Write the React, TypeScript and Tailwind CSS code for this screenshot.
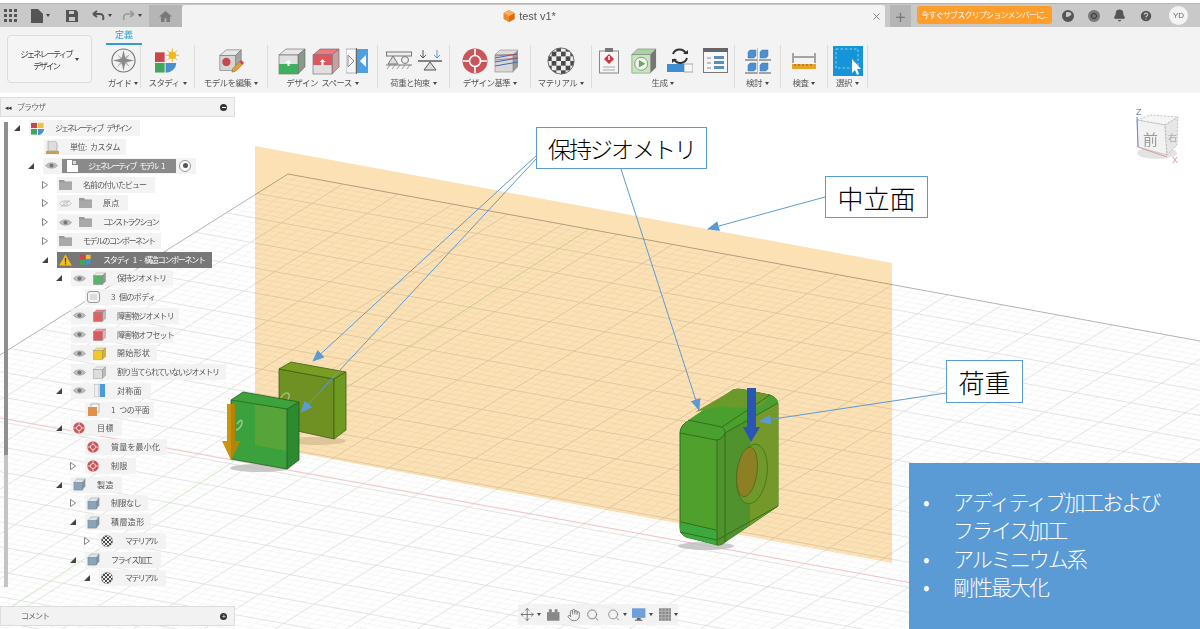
import type { ReactNode } from 'react'
import { Bell, CircleHelp, Hand, Move, Search, X } from 'lucide-react'

type Tri = 'filled' | 'open' | undefined

// --- viewport grid (orthographic floor, so plain lattice steps) ---
const O = { x: 288, y: 174 }
const U = { x: 55, y: 10.03 }
const V = { x: -30.8, y: 19.4 }

function gridPaths() {
  const minor: string[] = []
  const major: string[] = []
  for (let i = 1; i <= 170; i++) {
    const sx = O.x + (V.x * i) / 5
    const sy = O.y + (V.y * i) / 5
    const d = `M${sx} ${sy}L${sx + U.x * 34} ${sy + U.y * 34}`
    if (i % 5 === 0) major.push(d)
    else minor.push(d)
  }
  for (let j = 1; j <= 170; j++) {
    const sx = O.x + (U.x * j) / 5
    const sy = O.y + (U.y * j) / 5
    const d = `M${sx} ${sy}L${sx + V.x * 34} ${sy + V.y * 34}`
    if (j % 5 === 0) major.push(d)
    else minor.push(d)
  }
  return { minor: minor.join(''), major: major.join('') }
}

function Caret() {
  return <span className="inline-block ml-[3px] align-middle border-x-[2.5px] border-x-transparent border-t-[3px] border-t-[#444]" />
}

// --- small drawn icons ---
function Checker({ size = 28 }: { size?: number }) {
  const cells = []
  for (let y = 0; y < 6; y++) for (let x = 0; x < 6; x++) if ((x + y) % 2 === 0) cells.push(<rect key={`${x}${y}`} x={x * 5} y={y * 5} width="5" height="5" fill="#4a4a4a" />)
  return (
    <svg width={size} height={size} viewBox="0 0 30 30">
      <clipPath id={`cb${size}`}><circle cx="15" cy="15" r="14" /></clipPath>
      <circle cx="15" cy="15" r="14" fill="#eee" />
      <g clipPath={`url(#cb${size})`}>{cells}</g>
      <circle cx="15" cy="15" r="14" fill="none" stroke="#666" />
    </svg>
  )
}

function Target({ size = 26 }: { size?: number }) {
  return (
    <svg width={size} height={size} viewBox="0 0 26 26">
      <circle cx="13" cy="13" r="12.5" fill="#c9545a" />
      <circle cx="13" cy="13" r="5.5" fill="none" stroke="#fff" strokeWidth="1.6" />
      <path d="M13 1v7M13 18v7M1 13h7M18 13h7" stroke="#fff" strokeWidth="1.6" />
    </svg>
  )
}

function Cube({ top, front, side, size = 28, children }: { top: string; front: string; side: string; size?: number; children?: ReactNode }) {
  return (
    <svg width={size} height={size} viewBox="0 0 28 28">
      <path d="M1 8l7-6h19l-7 6z" fill={top} stroke="#666" strokeWidth=".6" />
      <path d="M20 8l7-6v18l-7 7z" fill={side} stroke="#666" strokeWidth=".6" />
      <rect x="1" y="8" width="19" height="19" fill={front} stroke="#666" strokeWidth=".6" />
      {children}
    </svg>
  )
}

function StudyIcon({ size = 13 }: { size?: number }) {
  return (
    <svg width={size} height={size} viewBox="0 0 14 14">
      <rect x="0" y="1" width="6.5" height="5.5" fill="#c8474b" />
      <rect x="0" y="7.5" width="6.5" height="6" fill="#3fa65a" />
      <path d="M7.5 7.5H14C14 11 11 14 7.5 14z" fill="#4a90d0" />
      <rect x="7.5" y="1" width="6" height="5.5" fill="#e8c33c" />
    </svg>
  )
}

function Eye({ off }: { off?: boolean }) {
  return (
    <svg width="13" height="9" viewBox="0 0 13 9">
      <path d="M.5 4.5C3 1 10 1 12.5 4.5 10 8 3 8 .5 4.5z" fill={off ? 'none' : '#bdbdbd'} stroke={off ? '#b5b5b5' : '#a5a5a5'} strokeWidth=".8" />
      <circle cx="6.5" cy="4.5" r="2" fill={off ? 'none' : '#777'} stroke={off ? '#b5b5b5' : 'none'} strokeWidth=".7" />
      {off && <path d="M2 8l9-7" stroke="#b5b5b5" strokeWidth=".8" />}
    </svg>
  )
}

function Folder() {
  return (
    <svg width="13" height="10" viewBox="0 0 13 10">
      <path d="M0 0h5l1 1.5h7V10H0z" fill="#9a9a9a" />
      <rect x="0" y="2.5" width="13" height="7.5" fill="#a9a9a9" />
    </svg>
  )
}

function Warning() {
  return (
    <svg width="13" height="12" viewBox="0 0 13 12">
      <path d="M6.5.5L12.8 11.5H.2z" fill="#f3c11b" />
      <rect x="5.9" y="4" width="1.2" height="4.5" fill="#333" />
      <rect x="5.9" y="9.2" width="1.2" height="1.2" fill="#333" />
    </svg>
  )
}

function SpaceCube() {
  return (
    <svg width="13" height="13" viewBox="0 0 14 14">
      <path d="M1 5l3-4h9l-3 4z" fill="#dfe6ea" stroke="#88949c" strokeWidth=".5" />
      <path d="M10 5l3-4v8l-3 4z" fill="#7d95a8" stroke="#88949c" strokeWidth=".5" />
      <rect x="1" y="5" width="9" height="8" fill="#8aa4b8" stroke="#6f7f8c" strokeWidth=".5" />
    </svg>
  )
}

const tinyCube = (top: string, front: string, side: string) => <Cube top={top} front={front} side={side} size={13} />

type RowData = {
  tri?: Tri
  left: string
  width: string
  track: string
  eye?: 'on' | 'off'
  icon: ReactNode
  label: string
  dark?: boolean
}

const treeRows: RowData[] = [
  { tri: 'filled', left: 'pl-[14px]', width: 'w-[111px]', track: 'tracking-[-2px] [word-spacing:4px]', icon: <StudyIcon />, label: 'ジェネレーティブ デザイン' },
  { left: 'pl-[29px]', width: 'w-[82px]', track: 'tracking-[-0.5px] [word-spacing:2px]', icon: <svg width="13" height="13" viewBox="0 0 13 13"><path d="M2 0h7l2 2v8H2z" fill="#ddd" stroke="#999" strokeWidth=".6" /><rect x="0" y="10" width="13" height="3" fill="#c8a04a" /></svg>, label: '単位: カスタム' },
]

const restRows: RowData[] = [
  { tri: 'open', left: 'pl-[42px]', width: 'w-[98px]', track: 'tracking-[-1px]', icon: <Folder />, label: '名前の付いたビュー' },
  { tri: 'open', left: 'pl-[42px]', width: 'w-[71px]', track: 'tracking-[0.3px]', eye: 'off', icon: <Folder />, label: '原点' },
  { tri: 'open', left: 'pl-[42px]', width: 'w-[103px]', track: 'tracking-[-1.9px]', eye: 'on', icon: <Folder />, label: 'コンストラクション' },
  { tri: 'open', left: 'pl-[42px]', width: 'w-[104px]', track: 'tracking-[-1.5px]', icon: <Folder />, label: 'モデルのコンポーネント' },
  { tri: 'filled', left: 'pl-[42px]', width: 'w-[155px]', track: 'tracking-[-1.3px] [word-spacing:3px]', eye: 'on', icon: <StudyIcon size={11} />, label: 'スタディ 1 - 構造コンポーネント', dark: true },
  { tri: 'filled', left: 'pl-[56px]', width: 'w-[102px]', track: 'tracking-[-1px]', eye: 'on', icon: tinyCube('#eee', '#58b46a', '#999'), label: '保持ジオメトリ' },
  { left: 'pl-[70px]', width: 'w-[67px]', track: 'tracking-[-0.6px] [word-spacing:3px]', icon: <svg width="13" height="12" viewBox="0 0 13 12"><rect x=".5" y=".5" width="12" height="11" rx="2.5" fill="#f4f4f4" stroke="#999" /><rect x="3" y="3" width="7" height="6" rx="1" fill="#dcdcdc" /></svg>, label: '3 個のボディ' },
  { left: 'pl-[56px]', width: 'w-[108px]', track: 'tracking-[-0.9px]', eye: 'on', icon: tinyCube('#f08088', '#e06068', '#bbb'), label: '障害物ジオメトリ' },
  { left: 'pl-[56px]', width: 'w-[102px]', track: 'tracking-[-0.9px]', eye: 'on', icon: tinyCube('#f0a0a0', '#d85a60', '#e8b0b0'), label: '障害物オフセット' },
  { left: 'pl-[56px]', width: 'w-[86px]', track: 'tracking-[0.3px]', eye: 'on', icon: tinyCube('#f6e07a', '#f0c828', '#ddb020'), label: '開始形状' },
  { left: 'pl-[56px]', width: 'w-[155px]', track: 'tracking-[-1.2px]', eye: 'on', icon: tinyCube('#eee', '#ddd', '#bbb'), label: '割り当てられていないジオメトリ' },
  { tri: 'filled', left: 'pl-[56px]', width: 'w-[80px]', track: 'tracking-[0.3px]', eye: 'on', icon: <svg width="11" height="13" viewBox="0 0 11 13"><rect width="5" height="13" fill="#eee" stroke="#888" strokeWidth=".5" /><rect x="6" width="5" height="13" fill="#4a9bdc" /></svg>, label: '対称面' },
  { left: 'pl-[70px]', width: 'w-[69px]', track: 'tracking-[-0.5px] [word-spacing:3px]', icon: <svg width="13" height="13" viewBox="0 0 13 13"><rect x="4" y="1" width="8" height="8" fill="#fff" stroke="#999" strokeWidth=".7" /><rect x="1" y="4" width="9" height="9" fill="#e0904a" /></svg>, label: '1 つの平面' },
  { tri: 'filled', left: 'pl-[56px]', width: 'w-[51px]', track: 'tracking-[0.4px]', icon: <Target size={12} />, label: '目標' },
  { left: 'pl-[70px]', width: 'w-[82px]', track: 'tracking-[0.2px]', icon: <Target size={12} />, label: '質量を最小化' },
  { tri: 'open', left: 'pl-[70px]', width: 'w-[51px]', track: 'tracking-[0.3px]', icon: <Target size={12} />, label: '制限' },
  { tri: 'filled', left: 'pl-[56px]', width: 'w-[51px]', track: 'tracking-[0.4px]', icon: <SpaceCube />, label: '製造' },
  { tri: 'open', left: 'pl-[70px]', width: 'w-[63px]', track: 'tracking-[-0.5px]', icon: <SpaceCube />, label: '制限なし' },
  { tri: 'filled', left: 'pl-[70px]', width: 'w-[66px]', track: 'tracking-[0.4px]', icon: <SpaceCube />, label: '積層造形' },
  { tri: 'open', left: 'pl-[84px]', width: 'w-[67px]', track: 'tracking-[-1.6px]', icon: <Checker size={12} />, label: 'マテリアル' },
  { tri: 'filled', left: 'pl-[70px]', width: 'w-[76px]', track: 'tracking-[-1.2px]', icon: <SpaceCube />, label: 'フライス加工' },
  { tri: 'filled', left: 'pl-[84px]', width: 'w-[67px]', track: 'tracking-[-1.6px]', icon: <Checker size={12} />, label: 'マテリアル' },
]

function TriMark({ kind }: { kind: Tri }) {
  return (
    <span className="w-[15px] shrink-0 flex items-center">
      {kind === 'filled' && <svg width="6" height="6" viewBox="0 0 6 6"><path d="M6 0v6H0z" fill="#444" /></svg>}
      {kind === 'open' && <svg width="6" height="8" viewBox="0 0 6 8"><path d="M.5.5L5.5 4 .5 7.5z" fill="#fff" stroke="#666" strokeWidth=".8" /></svg>}
    </span>
  )
}

function TreeRow({ row }: { row: RowData }) {
  return (
    <div className={`flex items-center h-[18.75px] ${row.left}`}>
      <TriMark kind={row.tri} />
      <div className={`flex items-center h-[16px] text-[8px] whitespace-nowrap ${row.width} ${row.track} ${row.dark ? 'bg-[#777] text-white' : 'bg-[#f2f2f2]/90 text-[#555]'}`}>
        {row.eye ? (
          <>
            <span className="w-[16px] shrink-0 flex justify-center">{row.dark ? <Warning /> : <Eye off={row.eye === 'off'} />}</span>
            <span className="w-[24px] shrink-0 flex justify-center">{row.icon}</span>
            <span className="pl-[6px]">{row.label}</span>
          </>
        ) : (
          <>
            <span className="w-[16px] shrink-0 flex justify-center">{row.icon}</span>
            <span className="pl-[10px]">{row.label}</span>
          </>
        )}
      </div>
    </div>
  )
}

function ModelRow() {
  return (
    <div className="flex items-center h-[18.75px] pl-[28px]">
      <TriMark kind="filled" />
      <div className="flex items-center h-[16px] w-[153px] bg-[#f2f2f2]/90 text-[8px] tracking-[-2px] [word-spacing:4px] whitespace-nowrap">
        <span className="w-[16px] shrink-0 flex justify-center"><Eye /></span>
        <div className="ml-[3px] w-[114px] shrink-0 h-[14px] bg-[#8a8a8a] text-white flex items-center">
          <span className="w-[20px] shrink-0 flex justify-center">
            <svg width="11" height="12" viewBox="0 0 11 12"><path d="M0 0h5v5h6v7H0z" fill="#fff" /><path d="M6 1h3v3H6z" fill="#ddd" /></svg>
          </span>
          <span className="pl-[6px]">ジェネレーティブ モデル 1</span>
        </div>
        <span className="ml-[3px] w-[12px] h-[12px] shrink-0 rounded-full border border-[#999] bg-white flex items-center justify-center">
          <span className="w-[5px] h-[5px] rounded-full bg-[#555]" />
        </span>
      </div>
    </div>
  )
}

function Group({ width, label, children }: { width: string; label: string; children: ReactNode }) {
  return (
    <div className={`flex flex-col items-center h-[43px] border-r border-[#dddddd] ${width}`}>
      <div className="h-[31px] flex items-center justify-center gap-[6px]">{children}</div>
      <div className="text-[8.5px] tracking-[-0.6px] [word-spacing:2px] leading-[12px] text-[#555] whitespace-nowrap">{label}<Caret /></div>
    </div>
  )
}

function TitleBar() {
  return (
    <div className="h-[24px] bg-[#c9c9c9] border-t border-[#b5b5b5] flex items-end text-[#555]">
      <div className="w-[149px] h-full flex items-center pl-[4px]">
        <svg width="13" height="13" viewBox="0 0 13 13" fill="#555"><rect x="0" y="0" width="3" height="3" /><rect x="5" y="0" width="3" height="3" /><rect x="10" y="0" width="3" height="3" /><rect x="0" y="5" width="3" height="3" /><rect x="5" y="5" width="3" height="3" /><rect x="10" y="5" width="3" height="3" /><rect x="0" y="10" width="3" height="3" /><rect x="5" y="10" width="3" height="3" /><rect x="10" y="10" width="3" height="3" /></svg>
        <svg className="ml-[14px]" width="12" height="14" viewBox="0 0 12 14" fill="#555"><path d="M0 0h7l5 5v9H0z" /></svg>
        <Caret />
        <svg className="ml-[16px]" width="12" height="12" viewBox="0 0 12 12" fill="#555"><path d="M0 0h10l2 2v10H0zM3 1v3h5V1zM3 7v4h6V7z" fillRule="evenodd" /></svg>
        <svg className="ml-[14px]" width="13" height="11" viewBox="0 0 13 11" fill="none" stroke="#555" strokeWidth="2"><path d="M1 4h7c3 0 4 3 3 6M1 4l4-3M1 4l4 3" /></svg>
        <Caret />
        <svg className="ml-[10px]" width="13" height="11" viewBox="0 0 13 11" fill="none" stroke="#999" strokeWidth="1.6"><path d="M12 4H5C2 4 1 7 2 10M12 4L8 1M12 4L8 7" /></svg>
        <Caret />
      </div>
      <div className="w-[33px] h-[22px] bg-[#b5b5b5] flex items-center justify-center">
        <svg width="13" height="11" viewBox="0 0 14 12" fill="#7a7a7a"><path d="M7 0l7 6h-2v6H8V8H6v4H2V6H0z" /></svg>
      </div>
      <div className="w-[703px] h-[22px] bg-[#f3f3f3] rounded-t-[3px] grid grid-cols-[1fr_auto_1fr] items-center">
        <span />
        <div className="flex items-center gap-[4px] pr-[8px] font-['Liberation_Sans',sans-serif] text-[11px] text-[#555]">
          <svg width="12" height="12" viewBox="0 0 12 12"><path d="M6 0l5.500 3v6L6 12 .5 9V3z" fill="#f08a2c" /><path d="M6 6l5.500-3v6L6 12z" fill="#d86f15" /><path d="M6 0l5.500 3L6 6 .5 3z" fill="#f8b060" /></svg>
          test v1*
        </div>
        <X className="justify-self-end mr-[3px] text-[#777]" size={11} />
      </div>
      <div className="ml-[5px] w-[21px] h-[22px] bg-[#b5b5b5] flex items-center justify-center text-[#777] text-[18px] leading-none">+</div>
      <div className="ml-[6px] mb-[3px] w-[135px] h-[18px] rounded-[3px] bg-[#ff9e2a] text-white text-[8px] tracking-[-0.8px] flex items-center justify-center whitespace-nowrap overflow-hidden">今すぐサブスクリプションメンバーに...</div>
      <div className="h-full flex items-center">
        <span className="ml-[10px] w-[12px] h-[12px] rounded-full bg-[#555] border-[2px] border-[#555] overflow-hidden flex">
          <span className="w-[6px] h-[5px] bg-[#c9c9c9] rounded-br-full ml-[2px]" />
        </span>
        <span className="ml-[14px] w-[12px] h-[12px] rounded-full bg-[#777] flex items-center justify-center">
          <span className="w-[6px] h-[6px] rounded-full border border-[#333]" />
        </span>
        <Bell className="ml-[13px]" size={13} fill="#555" stroke="#555" />
        <CircleHelp className="ml-[13px]" size={14} fill="#555" stroke="#c9c9c9" />
        <span className="ml-[16px] w-[19px] h-[19px] rounded-full bg-[#f3f3f3] text-[8px] text-[#666] font-['Liberation_Sans',sans-serif] flex items-center justify-center">YD</span>
      </div>
    </div>
  )
}

function Ribbon() {
  return (
    <div className="h-[66px] bg-[#f3f3f3] flex pl-[7px]">
      <div className="mt-[8px] w-[85px] h-[48px] rounded-[4px] border border-[#dcdcdc] bg-[#f5f5f5] flex items-center justify-center text-[8.5px] leading-[12px] tracking-[-2px] text-[#444] text-center">
        <span>ジェネレーティブ<br />デザイン</span>
        <Caret />
      </div>
      <div className="ml-[14px] flex flex-col">
        <div className="w-[36px] h-[18px] border-b-[2px] border-[#2f9fd0] text-[9px] text-[#2f9fd0] text-center leading-[15px]">定義</div>
        <div className="flex">
          <Group width="w-[35px]" label="ガイド">
            <svg width="25" height="25" viewBox="0 0 26 26">
              <circle cx="13" cy="13" r="12" fill="#f1f1f1" stroke="#777" strokeWidth="1.2" />
              <path d="M6 6l6 5 8-5-5 7 5 7-7-5-7 5 5-7z" fill="#b5b5b5" />
              <path d="M13 2l2 9 9 2-9 2-2 9-2-9-9-2 9-2z" fill="#8a8a8a" />
            </svg>
          </Group>
          <Group width="w-[54px]" label="スタディ">
            <svg width="25" height="26" viewBox="0 0 26 26">
              <rect x="0" y="4" width="10" height="10" fill="#c8474b" />
              <rect x="0" y="15" width="10" height="10" fill="#3fa65a" />
              <path d="M11 15h11c0 6-5 10-11 10z" fill="#4a90d0" />
              <circle cx="18" cy="7" r="4" fill="#f2b71f" />
              <path d="M18 0v14M11 7h14M13 2l10 10M23 2L13 12" stroke="#f2b71f" strokeWidth="1" />
            </svg>
          </Group>
          <Group width="w-[73px]" label="モデルを編集">
            <svg width="26" height="26" viewBox="0 0 28 28">
              <path d="M2 8l7-6h16l-6 6z" fill="#e8e8e8" stroke="#777" strokeWidth=".7" />
              <path d="M19 8l6-6v15l-6 7z" fill="#a5a5a5" stroke="#777" strokeWidth=".7" />
              <rect x="2" y="8" width="17" height="16" fill="#d5d5d5" stroke="#777" strokeWidth=".7" />
              <circle cx="9" cy="15" r="4.500" fill="#c8474b" />
              <path d="M15 26l1-4 8-8 3 3-8 8z" fill="#e0a040" stroke="#a06a20" strokeWidth=".6" />
              <path d="M23 15l3 3 2-2-3-3z" fill="#d0484c" />
            </svg>
          </Group>
          <Group width="w-[110px]" label="デザイン スペース">
            <Cube top="#e6e6e6" front="#e0e0e0" side="#8a9a8a">
              <rect x="1" y="17" width="19" height="10" fill="#3fb060" />
              <path d="M10.500 13l3 3h-2v3h-2v-3h-2z" fill="#fff" />
            </Cube>
            <Cube top="#ee7a80" front="#e0e0e0" side="#c8a0a0">
              <rect x="1" y="8" width="19" height="10" fill="#e0565e" />
              <path d="M10.500 12l3 3h-2v4h-2v-4h-2z" fill="#fff" />
            </Cube>
            <svg width="22" height="26" viewBox="0 0 22 26">
              <rect x="0" y="1" width="10" height="24" fill="#f7f7f7" stroke="#888" strokeWidth=".6" />
              <path d="M2 7l6 6-6 6z" fill="none" stroke="#888" />
              <rect x="11" y="1" width="11" height="24" fill="#4f9fe0" />
              <path d="M20 7l-6 6 6 6z" fill="#fff" />
              <path d="M10.500 0v26" stroke="#666" />
            </svg>
          </Group>
          <Group width="w-[72px]" label="荷重と拘束">
            <svg width="26" height="20" viewBox="0 0 26 20" fill="none" stroke="#777">
              <rect x=".5" y="1" width="25" height="4" fill="#eee" />
              <path d="M7 5l-5 8h10z" fill="#ddd" />
              <circle cx="19" cy="9" r="3.500" fill="#eee" />
              <path d="M0 14h26" />
              <path d="M1 18l3-4M6 18l3-4M11 18l3-4M16 18l3-4M21 18l3-4" strokeWidth=".7" />
            </svg>
            <svg width="24" height="24" viewBox="0 0 24 24" fill="none" stroke="#555">
              <path d="M5 1v7M2 6l3 3 3-3" />
              <path d="M19 1v7M16 6l3 3 3-3" stroke="#4f9fe0" />
              <path d="M0 12h24" strokeWidth="1.4" />
              <path d="M12 13l-6 8h12z" fill="#ddd" />
            </svg>
          </Group>
          <Group width="w-[81px]" label="デザイン基準">
            <Target />
            <svg width="25" height="24" viewBox="0 0 25 24">
              <path d="M1 6l5-5h18l-5 5z" fill="#dcdcdc" stroke="#777" strokeWidth=".5" />
              <path d="M19 6l5-5v17l-5 5z" fill="#999" />
              <rect x="1" y="6" width="18" height="17" fill="#d8d8d8" stroke="#777" strokeWidth=".5" />
              <path d="M1 9l22-4M1 13l23-4M1 17l23-4" stroke="#3f6ab5" strokeWidth="1" />
              <path d="M1 7l23-2M1 11l23-2" stroke="#c8474b" strokeWidth=".6" />
            </svg>
          </Group>
          <Group width="w-[61px]" label="マテリアル">
            <Checker />
          </Group>
          <Group width="w-[143px]" label="生成">
            <svg width="20" height="26" viewBox="0 0 20 26">
              <rect x=".5" y="3" width="19" height="22" fill="#f5f5f5" stroke="#888" />
              <rect x="6" y="0" width="8" height="4" fill="#777" />
              <path d="M10 6l5 5-5 5-5-5z" fill="#d8343a" />
              <rect x="9.200" y="8" width="1.600" height="4" fill="#fff" />
              <path d="M4 19h12M4 22h12" stroke="#aaa" />
            </svg>
            <svg className="ml-[6px]" width="26" height="26" viewBox="0 0 28 28">
              <path d="M1 7l6-6h20l-6 6z" fill="#a8d4a0" stroke="#666" strokeWidth=".5" />
              <path d="M21 7l6-6v20l-6 6z" fill="#777" />
              <rect x="1" y="7" width="20" height="20" fill="#c8e4c0" stroke="#666" strokeWidth=".5" />
              <circle cx="11" cy="17" r="7" fill="#f3f3f3" stroke="#6aa860" />
              <path d="M8.500 13l7 4-7 4z" fill="#6aa860" />
            </svg>
            <svg className="ml-[4px]" width="26" height="26" viewBox="0 0 26 26">
              <path d="M6 6a7 7 0 0 1 13 0M20 10a7 7 0 0 1-13 1" fill="none" stroke="#333" strokeWidth="2" />
              <path d="M16 6h5V2zM10 11H5v4z" fill="#333" />
              <rect x="0" y="16" width="17" height="8" fill="#3f8fd0" />
              <rect x="17" y="16" width="9" height="8" fill="#f5f5f5" stroke="#777" strokeWidth=".6" />
            </svg>
            <svg className="ml-[4px]" width="25" height="25" viewBox="0 0 25 25">
              <rect x=".5" y=".5" width="24" height="24" fill="#f7f7f7" stroke="#777" />
              <rect x="0" y="0" width="25" height="4" fill="#666" />
              <path d="M4 10h4M4 15h4M4 20h4" stroke="#888" />
              <path d="M11 8h10v3H11zM11 13h10v3H11zM11 18h10v3H11z" fill="#5a8fbd" />
            </svg>
          </Group>
          <Group width="w-[46px]" label="検討">
            <svg width="26" height="26" viewBox="0 0 26 26">
              <g fill="#4f8fd0" stroke="#3f78b0" strokeWidth=".5">
                <path d="M3 4l2-2h6v6l-2 2H3z" />
                <path d="M15 4l2-2h6v6l-2 2h-6z" />
                <path d="M3 17l2-2h6v6l-2 2H3z" />
                <path d="M15 17l2-2h6v6l-2 2h-6z" />
              </g>
              <path d="M0 12h12M14 12h12M0 25h12M14 25h12" stroke="#555" strokeWidth="1.2" />
              <path d="M12.500 0v26" stroke="#bbb" />
            </svg>
          </Group>
          <Group width="w-[47px]" label="検査">
            <svg width="24" height="20" viewBox="0 0 24 20">
              <path d="M1 2v10M23 2v10M2 6h20" stroke="#555" fill="none" />
              <rect x="0" y="13" width="24" height="5" fill="#e8a32c" />
              <path d="M3 13v2M7 13v2M11 13v2M15 13v2M19 13v2" stroke="#8a6010" />
            </svg>
          </Group>
          <Group width="w-[40px]" label="選択">
            <svg width="30" height="30" viewBox="0 0 30 30">
              <rect width="30" height="30" fill="#1694d8" />
              <rect x="3" y="3" width="22" height="19" fill="none" stroke="#8fd0f0" strokeDasharray="2.5 2" />
              <path d="M19 13v14l3-3 2 5 2-1-2-5h4z" fill="#fff" />
            </svg>
          </Group>
        </div>
      </div>
    </div>
  )
}

function Scene() {
  const grid = gridPaths()
  return (
    <svg className="absolute inset-0 w-full h-full" viewBox="0 93 1200 536">
      <defs>
        <marker id="ah" markerWidth="12" markerHeight="10" refX="11" refY="5" orient="auto" markerUnits="userSpaceOnUse">
          <path d="M0 0L12 5 0 10z" fill="#5b9bd5" />
        </marker>
        <clipPath id="floorClip"><path d="M0 355L288 174L1200 341V629H0z" /></clipPath>
      </defs>

      {/* floor */}
      <g clipPath="url(#floorClip)" fill="none">
        <path d={grid.minor} stroke="#f0f0f0" strokeWidth=".6" />
        <path d={grid.major} stroke="#dcdcdc" strokeWidth=".8" />
        <path d="M0 418L1200 635" stroke="#f0bcbc" strokeWidth=".9" />
        <path d="M0 614L589 229" stroke="#c8e6bc" strokeWidth=".9" />
      </g>
      <path d="M0 355L288 174L1200 341" fill="none" stroke="#b3b3b3" strokeWidth="1" />

      {/* neutral plane */}
      <path d="M255 146L892 263V563L255 445z" fill="#fce1b5" className="mix-blend-multiply" />

      {/* back block */}
      <ellipse cx="316" cy="441" rx="30" ry="4" fill="#cdb48c" opacity=".6" />
      <g stroke="#3f5f12" strokeWidth=".8" strokeLinejoin="round">
        <path d="M279 369L334 379V439L279 427z" fill="#6f9022" />
        <path d="M279 369L291 362L346 372L334 379z" fill="#7a9c22" />
        <path d="M334 379L346 372V430L334 439z" fill="#6e9a20" />
      </g>
      <path d="M281 398c2-5 6-6 8-4 1 3-1 7-5 9l-2 4" fill="none" stroke="#a9bc72" strokeWidth="1.5" />

      {/* front block */}
      <ellipse cx="260" cy="468" rx="30" ry="4" fill="#bdbdbd" opacity=".8" />
      <g strokeLinejoin="round">
        <path d="M231 400L287 409V469L231 459z" fill="#3ba13c" />
        <path d="M255 404L287 409V451L255 445z" fill="#57a53a" />
        <path d="M231 400L243 392L299 402L287 409z" fill="#3ea23a" />
        <path d="M287 409L299 402V460L287 469z" fill="#2e8a30" />
        <path d="M231 400L287 409V469L231 459zM231 400L243 392L299 402L287 409M299 402V460L287 469" fill="none" stroke="#1e5e1e" strokeWidth=".8" />
      </g>
      <path d="M237 424c3-4 5-5 5-2 0 3-2 7-6 8" fill="none" stroke="#9acb90" strokeWidth="1.4" />
      <path d="M227 404h8v37h5l-9 19-9-19h5z" fill="#c8950c" />
      <path d="M231 404h4v37h5l-9 19z" fill="#b38408" />

      {/* holder with hole */}
      <ellipse cx="706" cy="546" rx="28" ry="4" fill="#bdbdbd" opacity=".8" />
      <path d="M680 432Q681 424 690 420L733 390Q737 388 745 390L770 395Q778 398 778 405V506L725 542Q720 547 714 544L686 537Q680 534 680 528z" fill="#4fa02c" stroke="#2f6b18" strokeWidth="1" />
      <path d="M725 433L778 403V506L725 542Q722 545 717 545V440z" fill="#4f922e" />
      <path d="M750 419L778 403V506L750 525z" fill="#74982a" />
      <path d="M690 419L733 390Q737 388 745 390L770 395Q778 398 778 403L725 433Q721 438 717 440L682 433Q681 424 690 420z" fill="#4aa02e" />
      <path d="M695 412L733 390Q737 388 745 390L770 395L762 406L735 408L723 406z" fill="#6a9a2a" />
      <path d="M681 522L716 530V545L686 537Q680 534 680 528z" fill="#3ca83e" />
      <g fill="none" stroke="#2f6b18" strokeWidth=".9">
        <path d="M680 433L716 440Q722 440 725 433L778 403" />
        <path d="M688 420L722 427Q726 430 725 433" />
        <path d="M717 440V545M725 433V542" />
        <path d="M680 532L717 540L778 506" />
        <path d="M681 522L716 530" />
        <path d="M722 427L770 395" />
      </g>
      <ellipse cx="752" cy="474" rx="15" ry="30" fill="#6f9a2b" stroke="#3f7318" strokeWidth=".8" transform="rotate(8 752 474)" />
      <ellipse cx="747" cy="472" rx="10" ry="25" fill="#8c7f24" stroke="#4f6a14" strokeWidth=".8" transform="rotate(8 747 472)" />
      <path d="M747 388h9v39h4l-9 15-8-15h4z" fill="#2a55b5" />

      {/* callout leaders */}
      <g stroke="#5b9bd5" strokeWidth="1">
        <path d="M537 155L313 361" markerEnd="url(#ah)" />
        <path d="M537 158L301 412" markerEnd="url(#ah)" />
        <path d="M621 169L699 410" markerEnd="url(#ah)" />
        <path d="M825 197L708 229" markerEnd="url(#ah)" />
        <path d="M946 393L760 421" markerEnd="url(#ah)" />
      </g>

      {/* view cube */}
      <ellipse cx="1157" cy="153" rx="20" ry="6" fill="#e3e3e3" />
      <path d="M1137 120L1150 115L1178 117L1165 125z" fill="#f5f5f5" stroke="#aaa" strokeWidth=".7" strokeDasharray="2 1.5" />
      <path d="M1137 120L1165 125L1167 155L1138 147z" fill="#f2f2f2" stroke="#bbb" strokeWidth=".7" />
      <path d="M1165 125L1178 117L1177 145L1167 155z" fill="#e6e6e6" stroke="#aaa" strokeWidth=".7" strokeDasharray="2 1.5" />
      <path d="M1137 117L1138 147" stroke="#7a80c8" strokeWidth="1" />
      <path d="M1138 147L1167 157" stroke="#dd9a9a" strokeWidth="1" />
      <text x="1136" y="115" fontSize="9" fill="#7a80c8" fontFamily="Liberation Sans">Z</text>
      <text x="1172" y="163" fontSize="9" fill="#dd9a9a" fontFamily="Liberation Sans">X</text>
      <text x="1143" y="145" fontSize="15" fill="#9a9a9a">前</text>
      <text x="1168" y="141" fontSize="9" fill="#aaa">右</text>
    </svg>
  )
}

export default function App() {
  return (
    <div className="w-[1200px] h-[629px] bg-white overflow-hidden flex flex-col font-['Noto_Sans_CJK_JP','Liberation_Sans',sans-serif]">
      <div className="h-[3px] bg-white shrink-0" />
      <TitleBar />
      <Ribbon />

      <div className="relative flex-1">
        <Scene />

        {/* browser panel */}
        <div className="absolute left-0 top-[4px] bottom-[3px] w-[235px] flex flex-col">
          <div className="h-[20px] border border-[#dddddd] bg-[#f2f2f2] flex items-center justify-between px-[4px] text-[8px] tracking-[-1px] text-[#666]">
            <span className="flex items-center gap-[6px]">
              <span className="text-[7px] tracking-[-1px] text-[#333]">◂◂</span>
              ブラウザ
            </span>
            <span className="w-[7px] h-[7px] mr-[3px] rounded-full bg-[#333] flex items-center justify-center">
              <span className="w-[4px] h-px bg-white" />
            </span>
          </div>
          <div className="relative flex-1 pt-[2px]">
            <div className="absolute left-[4px] top-[5px] w-[4px] h-[333px] bg-[#8f8f8f]" />
            <div className="absolute left-[4px] top-[338px] w-[4px] h-[132px] bg-[#c4c4c4]" />
            {treeRows.map((r) => <TreeRow key={r.label} row={r} />)}
            <ModelRow />
            {restRows.map((r, i) => <TreeRow key={`${r.label}${i}`} row={r} />)}
          </div>
          <div className="h-[20px] border border-[#dddddd] bg-[#f2f2f2] flex items-center justify-between pl-[20px] pr-[4px] text-[8px] tracking-[-1px] text-[#666]">
            コメント
            <span className="w-[7px] h-[7px] mr-[3px] rounded-full bg-[#333] flex items-center justify-center text-white text-[7px] leading-none">+</span>
          </div>
        </div>

        {/* nav bar */}
        <div className="absolute left-[518px] top-[511px] w-[160px] h-[21px] bg-[#f0f0f0]/80 flex items-center pl-[2px] text-[#666]">
          <Move size={15} strokeWidth={1.4} />
          <Caret />
          <svg className="ml-[6px]" width="13" height="12" viewBox="0 0 13 12"><rect y="3" width="13" height="9" fill="#888" /><rect x="2" y="0" width="3" height="3" fill="#888" /><rect x="8" y="0" width="3" height="3" fill="#888" /></svg>
          <Hand className="ml-[7px]" size={14} strokeWidth={1.4} />
          <Search className="ml-[6px]" size={14} strokeWidth={1.4} />
          <Search className="ml-[7px]" size={14} strokeWidth={1.2} />
          <Caret />
          <svg className="ml-[5px]" width="14" height="14" viewBox="0 0 14 14"><rect width="14" height="10" fill="#6f9fd8" /><path d="M5 10h4v2H5zM3 12h8v1H3z" fill="#666" /></svg>
          <Caret />
          <svg className="ml-[6px]" width="13" height="13" viewBox="0 0 13 13"><rect width="13" height="13" fill="#8a8a8a" /><path d="M3 0v13M6.500 0v13M10 0v13M0 3h13M0 6.500h13M0 10h13" stroke="#ccc" strokeWidth=".6" /></svg>
          <Caret />
        </div>

        {/* callouts */}
        <div className="absolute left-[536px] top-[34px] w-[171px] h-[42px] border border-[#5b9bd5] bg-white text-[23px] font-light tracking-[-2px] text-black flex items-center justify-center whitespace-nowrap">保持ジオメトリ</div>
        <div className="absolute left-[825px] top-[83px] w-[103px] h-[42px] border border-[#5b9bd5] bg-white text-[26px] font-light text-black flex items-center justify-center">中立面</div>
        <div className="absolute left-[946px] top-[267px] w-[77px] h-[43px] border border-[#5b9bd5] bg-white text-[26px] font-light text-black flex items-center justify-center">荷重</div>

        <ul className="absolute right-0 bottom-0 w-[291px] h-[166px] bg-[#5b9bd5] pt-[24px] pl-[14px] text-white text-[21px] font-light tracking-[-2px] leading-[28.300px]">
          <li className="flex"><span className="w-[30px] shrink-0">•</span><span>アディティブ加工および<br />フライス加工</span></li>
          <li className="flex"><span className="w-[30px] shrink-0">•</span><span>アルミニウム系</span></li>
          <li className="flex"><span className="w-[30px] shrink-0">•</span><span>剛性最大化</span></li>
        </ul>
      </div>
    </div>
  )
}
